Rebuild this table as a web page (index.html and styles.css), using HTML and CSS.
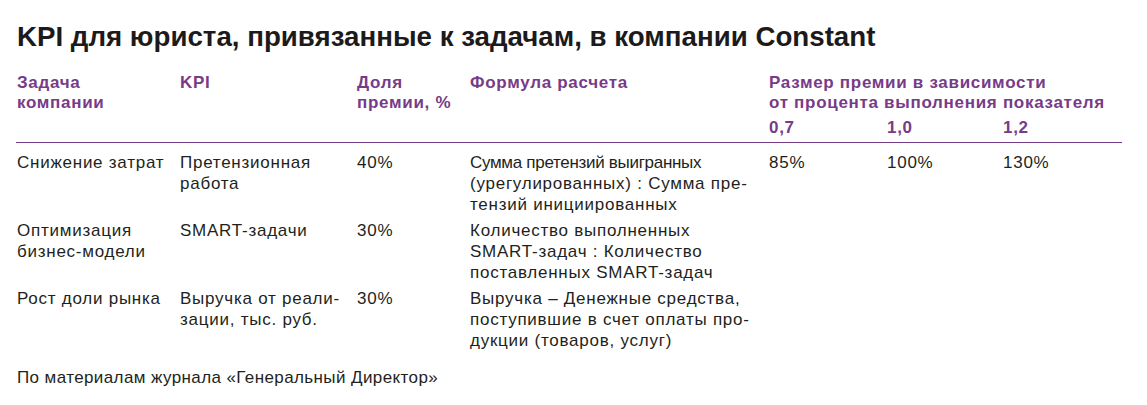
FILE: index.html
```html
<!DOCTYPE html>
<html lang="ru">
<head>
<meta charset="utf-8">
<title>KPI для юриста</title>
<link rel="stylesheet" href="styles.css">
</head>
<body>
<div class="page">
  <h1 class="title">KPI для юриста, привязанные к задачам, в компании Constant</h1>
  <div class="kpi">
    <div class="th head-tall">Задача<br>компании</div>
    <div class="th head-tall">KPI</div>
    <div class="th head-tall">Доля<br>премии, %</div>
    <div class="th head-tall">Формула расчета</div>
    <div class="th head-wide">Размер премии в зависимости<br>от процента выполнения показателя</div>
    <div class="th sub">0,7</div>
    <div class="th sub">1,0</div>
    <div class="th sub">1,2</div>
    <div class="rule"></div>

    <div class="td">Снижение затрат</div>
    <div class="td">Претензионная<br>работа</div>
    <div class="td">40%</div>
    <div class="td"><span class="tight">Сумма претензий выигранных</span><br>(урегулированных) : Сумма пре-<br>тензий инициированных</div>
    <div class="td">85%</div>
    <div class="td">100%</div>
    <div class="td">130%</div>

    <div class="td">Оптимизация<br>бизнес-модели</div>
    <div class="td">SMART-задачи</div>
    <div class="td">30%</div>
    <div class="td">Количество выполненных<br>SMART-задач : Количество<br>поставленных SMART-задач</div>
    <div class="td"></div>
    <div class="td"></div>
    <div class="td"></div>

    <div class="td">Рост доли рынка</div>
    <div class="td">Выручка от реали-<br>зации, тыс. руб.</div>
    <div class="td">30%</div>
    <div class="td">Выручка – Денежные средства,<br>поступившие в счет оплаты про-<br>дукции (товаров, услуг)</div>
    <div class="td"></div>
    <div class="td"></div>
    <div class="td"></div>
  </div>
  <p class="source">По материалам журнала «Генеральный Директор»</p>
</div>
</body>
</html>
```

FILE: styles.css
```css
html, body {
  margin: 0;
  padding: 0;
  background: #ffffff;
}

body {
  font-family: "Liberation Sans", Arial, sans-serif;
  color: #231f20;
}

.page {
  padding: 0 25px 0 16px;
}

.title {
  margin: 0;
  padding-top: 21px;
  padding-left: 1px;
  font-size: 27.7px;
  line-height: 32px;
  font-weight: 700;
  color: #1c1a1b;
}

.kpi {
  display: grid;
  grid-template-columns: 163px 177px 113px 299px 118px 116px 1fr;
  margin-top: 20px;
}

.th {
  font-size: 17px;
  line-height: 20px;
  letter-spacing: 0.7px;
  font-weight: 700;
  color: #773b88;
  padding-left: 1px;
}

.head-tall {
  grid-row: 1 / span 2;
}

.head-wide {
  grid-column: 5 / span 3;
  grid-row: 1;
}

.sub {
  grid-row: 2;
  padding-top: 5px;
  padding-bottom: 4px;
}

.rule {
  grid-column: 1 / -1;
  height: 1px;
  background: #773b88;
  margin-bottom: 9px;
}

.td {
  font-size: 17px;
  line-height: 21px;
  letter-spacing: 0.75px;
  padding-left: 1px;
  padding-bottom: 5px;
}

.tight {
  letter-spacing: -0.3px;
}

.source {
  margin: 11px 0 0;
  font-size: 17px;
  line-height: 21px;
  letter-spacing: 0.4px;
  padding-left: 1px;
}
```
